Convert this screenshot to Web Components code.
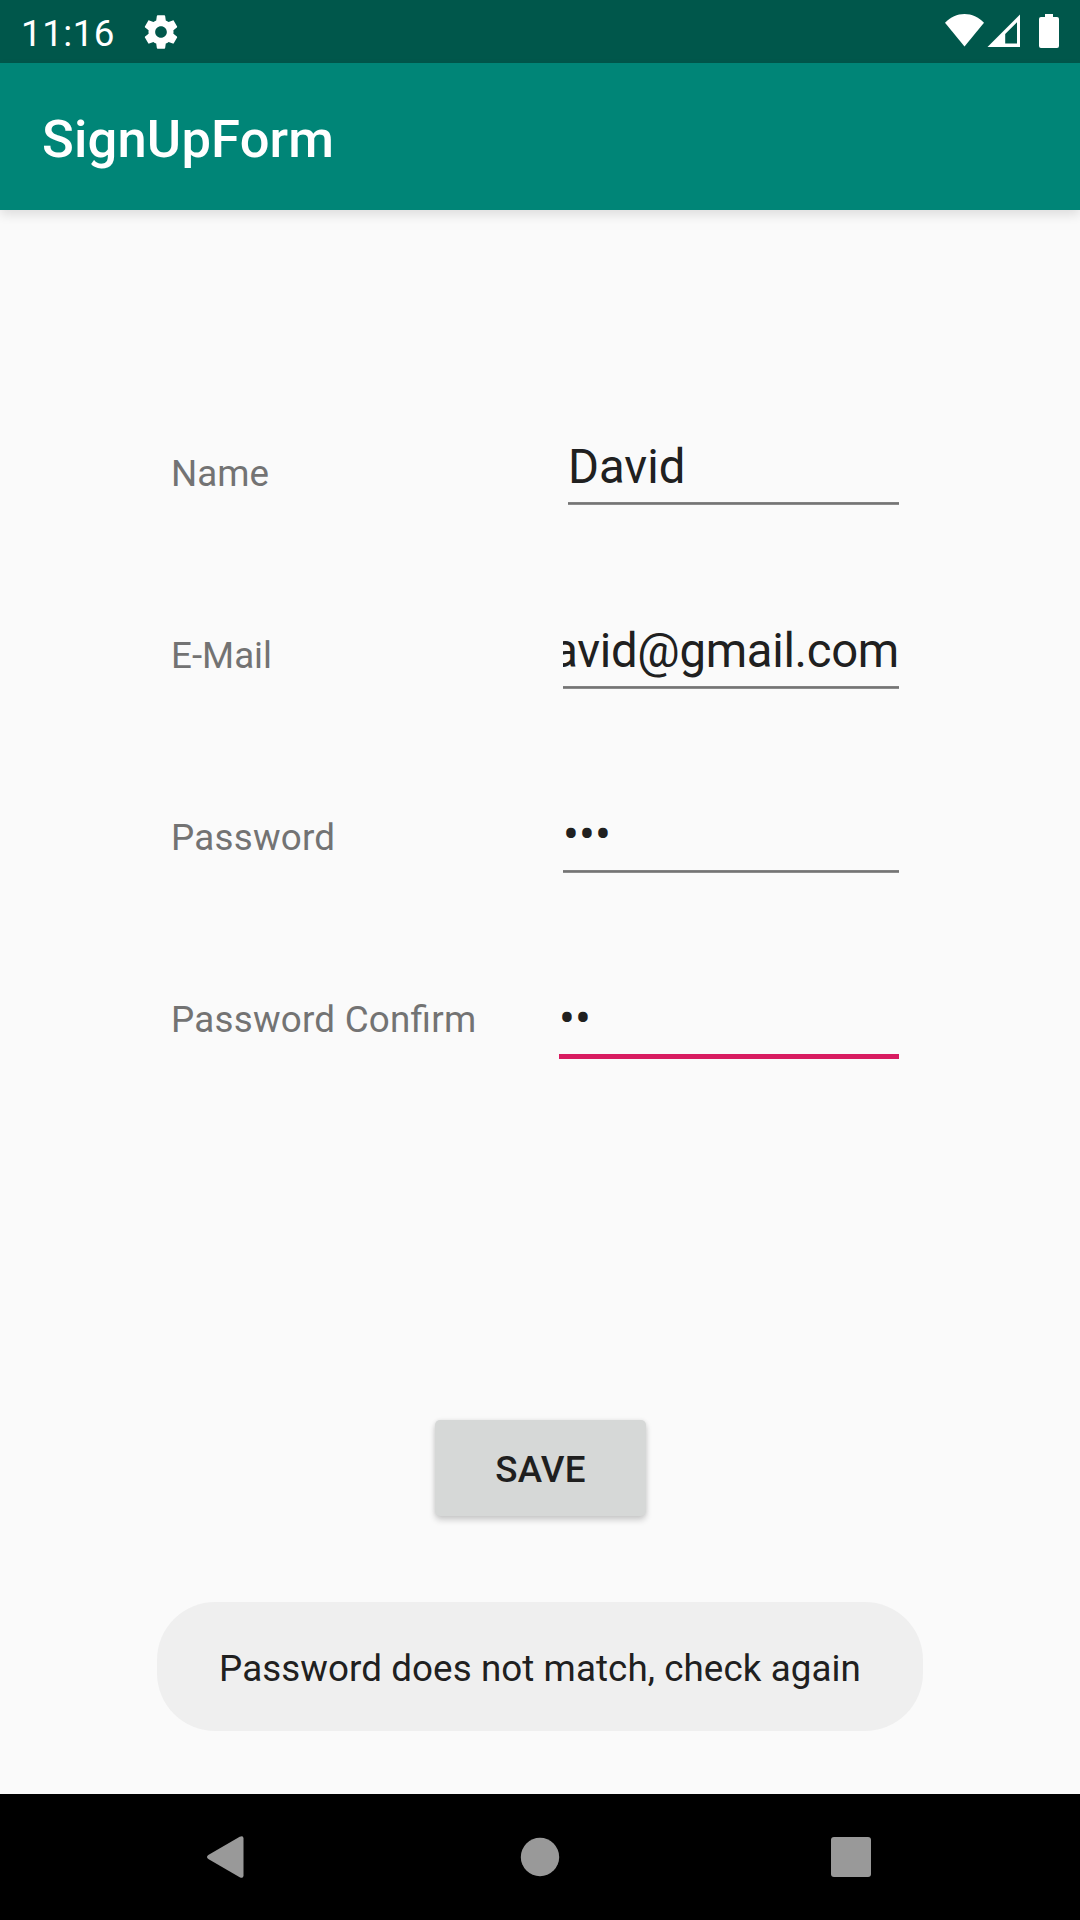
<!DOCTYPE html>
<html lang="en">
<head>
<meta charset="utf-8">
<title>SignUpForm</title>
<style>
  html, body { margin: 0; padding: 0; }
  body { width: 1080px; height: 1920px; overflow: hidden; background: #fafafa; font-family: Roboto, "Noto Sans", sans-serif; }
</style>
</head>
<body>
<sign-up-app></sign-up-app>
<script>
  const define = (name, html) => {
    const template = document.createElement('template');
    template.innerHTML = html;
    customElements.define(name, class extends HTMLElement {
      constructor() {
        super();
        this.attachShadow({ mode: 'open' }).appendChild(template.content.cloneNode(true));
      }
    });
  };

  define('status-bar', `
    <style>
      :host { display: flex; justify-content: space-between; align-items: flex-start; box-sizing: border-box;
        height: 63px; background: #00574b; color: #fff; font-size: 36.75px; line-height: 43px; }
      .left { display: flex; padding: 12px 0 0 21px; }
      .time { width: 120px; letter-spacing: .5px; }
      .gear { width: 40px; height: 40px; }
      svg { display: block; }
      .right { width: 160px; height: 63px; }
    </style>
    <div class="left">
      <span class="time">11:16</span>
      <svg class="gear" viewBox="0 0 24 24" fill="#fff"><path d="M19.43 12.98c.04-.32.07-.64.07-.98s-.03-.66-.07-.98l2.11-1.65c.19-.15.24-.42.12-.64l-2-3.46c-.12-.22-.39-.3-.61-.22l-2.49 1c-.52-.4-1.08-.73-1.69-.98l-.38-2.65C14.46 2.18 14.25 2 14 2h-4c-.25 0-.46.18-.49.42l-.38 2.65c-.61.25-1.17.59-1.69.98l-2.49-1c-.23-.09-.49 0-.61.22l-2 3.46c-.13.22-.07.49.12.64l2.11 1.65c-.04.32-.07.65-.07.98s.03.66.07.98l-2.11 1.65c-.19.15-.24.42-.12.64l2 3.46c.12.22.39.3.61.22l2.49-1c.52.4 1.08.73 1.69.98l.38 2.65c.03.24.24.42.49.42h4c.25 0 .46-.18.49-.42l.38-2.65c.61-.25 1.17-.59 1.69-.98l2.49 1c.23.09.49 0 .61-.22l2-3.46c.12-.22.07-.49-.12-.64l-2.11-1.65zM12 15.5c-1.93 0-3.5-1.57-3.5-3.5s1.57-3.5 3.5-3.5 3.5 1.57 3.5 3.5-1.57 3.5-3.5 3.5z"/></svg>
    </div>
    <svg class="right" viewBox="0 0 160 63" fill="#fff">
      <path d="M44.5 46.5 25 22.7C30.5 17 37.2 14 44.5 14S58.500 17 64 22.700Z"/>
      <path fill-rule="evenodd" d="M100 14.500V47H67.500ZM97 22.300 85.200 34V43.500H97Z"/>
      <path d="M125 14h8v3h4q2 0 2 2v27q0 2-2 2h-16q-2 0-2-2V19q0-2 2-2h4Z"/>
    </svg>`);

  define('app-bar', `
    <style>
      :host { display: flex; align-items: flex-start; box-sizing: border-box; height: 147px; padding: 45px 42px 0;
        background: #008577; color: #fff; font-size: 52.5px; line-height: 62px; font-weight: 500; letter-spacing: .18px;
        position: relative; box-shadow: 0 5px 10px rgba(0,0,0,.11); }
    </style>
    <slot></slot>`);

  define('form-label', `
    <style>
      :host { display: block; font-size: 36.75px; line-height: 43px; height: 43px; color: #737373; white-space: nowrap; }
      :host([wide]) { letter-spacing: .25px; font-feature-settings: "liga" 1; }
    </style>
    <slot></slot>`);

  define('form-field', `
    <style>
      :host { display: flex; flex-direction: column; box-sizing: border-box; width: 336px; height: 75px; color: #202020; }
      .value { display: flex; justify-content: var(--justify, flex-start); overflow: hidden; height: 63px;
        font-size: 47.25px; line-height: 56px; white-space: nowrap; }
      .line { height: 3px; background: linear-gradient(#818181 0 1px, #747474 1px 2px, #8c8c8c 2px); }
      :host([focused]) .line { height: 5px; background: #d81b60; }
    </style>
    <div class="value"><slot></slot></div><div class="line"></div>`);

  define('raised-button', `
    <style>
      :host { display: flex; justify-content: center; box-sizing: border-box; width: 211px; height: 96px; padding-top: 28px;
        margin-left: 1px; border-radius: 5px; background: #d6d8d7; color: #1f1f1f; font-size: 36.75px; line-height: 43px;
        font-weight: 500; letter-spacing: .25px; box-shadow: 0 4px 6px rgba(0,0,0,.18), 0 0 4px rgba(0,0,0,.08); }
    </style>
    <slot></slot>`);

  define('toast-message', `
    <style>
      :host { display: flex; justify-content: center; box-sizing: border-box; width: 766px; height: 129px; padding-top: 45px;
        border-radius: 58px; background: #efefef; color: #202020; font-size: 36.75px; line-height: 43px; white-space: nowrap;
        letter-spacing: .08px; }
    </style>
    <slot></slot>`);

  define('nav-bar', `
    <style>
      :host { display: block; height: 126px; background: #000; }
      svg { display: block; width: 1080px; height: 126px; }
    </style>
    <svg viewBox="0 0 1080 126" fill="#999">
      <path d="M239.700 42.800 208.300 61Q205.700 63 208.300 65L239.700 83.200Q243.500 85 243.500 81.500V44.500Q243.500 41 239.700 42.800Z"/>
      <circle cx="540" cy="63" r="19.2"/>
      <rect x="831" y="43" width="40" height="40" rx="3"/>
    </svg>`);

  define('sign-up-app', `
    <style>
      :host { display: flex; flex-direction: column; width: 1080px; height: 1920px; background: #fafafa; }
      main { flex: 1; display: flex; flex-direction: column; align-items: center; }
      .form { display: flex; justify-content: space-between; align-items: flex-start; align-self: stretch;
        box-sizing: border-box; height: 1210px; padding: 229px 181px 0 171px; }
      .labels, .fields { display: flex; flex-direction: column; }
      .labels { gap: 139px; padding-top: 13px; }
      .fields { gap: 109px; align-items: flex-end; }
      .name { width: 331px; }
      .email { --justify: flex-end; letter-spacing: -.3px; }
      .confirm { width: 340px; }
      toast-message { margin-top: 86px; }
    </style>
    <status-bar></status-bar>
    <app-bar>SignUpForm</app-bar>
    <main>
      <div class="form">
        <div class="labels">
          <form-label>Name</form-label>
          <form-label>E-Mail</form-label>
          <form-label wide>Password</form-label>
          <form-label wide>Password Confirm</form-label>
        </div>
        <div class="fields">
          <form-field class="name">David</form-field>
          <form-field class="email">david@gmail.com</form-field>
          <form-field>•••</form-field>
          <form-field class="confirm" focused>••</form-field>
        </div>
      </div>
      <raised-button>SAVE</raised-button>
      <toast-message>Password does not match, check again</toast-message>
    </main>
    <nav-bar></nav-bar>`);
</script>
</body>
</html>
